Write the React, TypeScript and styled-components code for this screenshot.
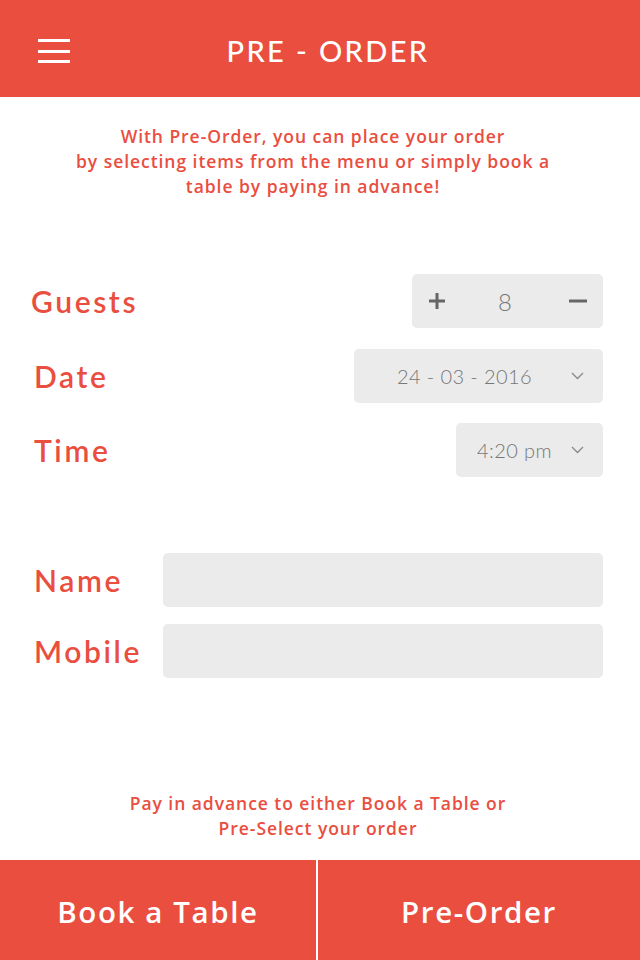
import React from "react";
import styled, { createGlobalStyle } from "styled-components";

const RED = "#E94E3F";
const FIELD = "#EBEBEB";

const Global = createGlobalStyle`
  html, body { margin: 0; padding: 0; background: #fff; }
  * { box-sizing: border-box; }
`;

const Page = styled.div`
  width: 640px;
  height: 960px;
  display: flex;
  flex-direction: column;
  background: #fff;
  font-family: "Open Sans", "Liberation Sans", sans-serif;
`;

const Header = styled.header`
  height: 97px;
  flex-shrink: 0;
  background: ${RED};
  position: relative;
  display: flex;
  align-items: center;
  justify-content: center;
`;

const MenuButton = styled.button`
  position: absolute;
  left: 38px;
  top: 39px;
  width: 32px;
  height: 24px;
  padding: 0;
  border: 0;
  background: transparent;
  display: flex;
  flex-direction: column;
  justify-content: space-between;
`;

const MenuLine = styled.span`
  display: block;
  height: 3px;
  width: 100%;
  background: #fff;
`;

const Title = styled.h1`
  margin: 0;
  color: #fff;
  font-family: "Lato", sans-serif;
  font-weight: 500;
  font-size: 29px;
  letter-spacing: 2.4px;
  padding-left: 16px;
  padding-top: 3px;
`;

const Note = styled.p<{ $top: number; $offset?: number }>`
  margin: ${(p) => p.$top}px 0 0;
  padding-right: ${(p) => p.$offset ?? 0}px;
  text-align: center;
  color: ${RED};
  font-family: "Open Sans", sans-serif;
  font-weight: 600;
  font-size: 17.5px;
  line-height: 25px;
  letter-spacing: 0.95px;
`;

const Form = styled.section<{ $top: number; $gap: number }>`
  margin-top: ${(p) => p.$top}px;
  padding: 0 37px 0 34px;
  display: flex;
  flex-direction: column;
  gap: ${(p) => p.$gap}px;
`;

const Row = styled.div`
  display: flex;
  align-items: center;
  justify-content: space-between;
  gap: 20px;
`;

const Label = styled.label<{ $shift?: number }>`
  color: ${RED};
  font-family: "Lato", sans-serif;
  font-weight: 600;
  font-size: 30px;
  letter-spacing: 2.6px;
  margin-left: ${(p) => p.$shift ?? 0}px;
  white-space: nowrap;
`;

const Stepper = styled.div`
  width: 191px;
  height: 54px;
  border-radius: 5px;
  background: ${FIELD};
  display: flex;
  align-items: center;
  justify-content: space-between;
  padding: 0 16px 0 16px;
`;

const StepButton = styled.button`
  width: 18px;
  height: 18px;
  padding: 0;
  border: 0;
  background: transparent;
  display: flex;
  align-items: center;
  justify-content: center;
`;

const Count = styled.span`
  font-family: "Lato", sans-serif;
  font-weight: 300;
  font-size: 24px;
  color: #777;
  margin-right: 5px;
`;

const Select = styled.div<{ $width: number; $pl: number }>`
  width: ${(p) => p.$width}px;
  height: 54px;
  border-radius: 5px;
  background: ${FIELD};
  display: flex;
  align-items: center;
  justify-content: space-between;
  padding: 0 19px 0 ${(p) => p.$pl}px;
`;

const Value = styled.span`
  font-family: "Lato", sans-serif;
  font-weight: 300;
  font-size: 20px;
  color: #777;
  letter-spacing: 0.4px;
`;

const Input = styled.input`
  flex: 0 0 440px;
  width: 440px;
  height: 54px;
  border: 0;
  border-radius: 5px;
  background: ${FIELD};
  outline: none;
  padding: 0 16px;
  font-family: "Lato", sans-serif;
  font-size: 20px;
`;

const Spacer = styled.div`
  flex: 1;
`;

const Actions = styled.div`
  height: 100px;
  flex-shrink: 0;
  display: grid;
  grid-template-columns: 316px 1fr;
  gap: 2px;
  background: #fff;
  margin-top: 19px;
`;

const Action = styled.button`
  border: 0;
  background: ${RED};
  color: #fff;
  font-family: "Open Sans", sans-serif;
  font-weight: 600;
  font-size: 29.5px;
  letter-spacing: 1.6px;
  padding: 0;
  padding-top: 2px;
`;

const Plus = () => (
  <svg width="18" height="18" viewBox="0 0 18 18">
    <path d="M9 1v16M1 9h16" stroke="#666" strokeWidth="3" />
  </svg>
);

const Minus = () => (
  <svg width="18" height="18" viewBox="0 0 18 18">
    <path d="M0 9h18" stroke="#666" strokeWidth="3" />
  </svg>
);

const Chevron = () => (
  <svg width="13" height="8" viewBox="0 0 13 8">
    <path d="M1 1l5.5 5.5L12 1" stroke="#888" strokeWidth="1.3" fill="none" />
  </svg>
);

export default function App() {
  return (
    <Page>
      <Global />
      <Header>
        <MenuButton aria-label="menu">
          <MenuLine />
          <MenuLine />
          <MenuLine />
        </MenuButton>
        <Title>PRE - ORDER</Title>
      </Header>

      <Note $top={27} $offset={14}>
        With Pre-Order, you can place your order
        <br />
        by selecting items from the menu or simply book a
        <br />
        table by paying in advance!
      </Note>

      <Form $top={75} $gap={20.5}>
        <Row>
          <Label $shift={-3}>Guests</Label>
          <Stepper>
            <StepButton aria-label="add">
              <Plus />
            </StepButton>
            <Count>8</Count>
            <StepButton aria-label="remove">
              <Minus />
            </StepButton>
          </Stepper>
        </Row>
        <Row>
          <Label>Date</Label>
          <Select $width={249} $pl={43}>
            <Value>24 - 03 - 2016</Value>
            <Chevron />
          </Select>
        </Row>
        <Row>
          <Label>Time</Label>
          <Select $width={147} $pl={21}>
            <Value>4:20 pm</Value>
            <Chevron />
          </Select>
        </Row>
      </Form>

      <Form $top={76} $gap={17}>
        <Row>
          <Label>Name</Label>
          <Input />
        </Row>
        <Row>
          <Label>Mobile</Label>
          <Input />
        </Row>
      </Form>

      <Spacer />

      <Note $top={0} $offset={4}>
        Pay in advance to either Book a Table or
        <br />
        Pre-Select your order
      </Note>

      <Actions>
        <Action>Book a Table</Action>
        <Action>Pre-Order</Action>
      </Actions>
    </Page>
  );
}
